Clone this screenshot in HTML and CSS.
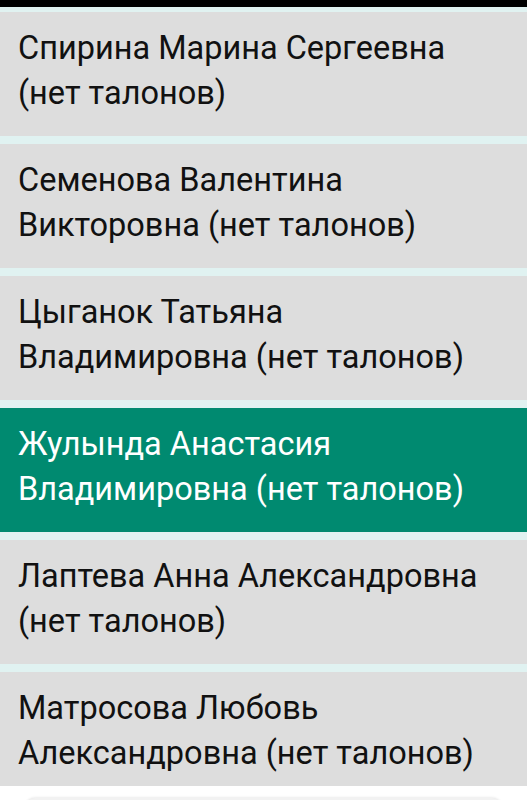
FILE: index.html
```html
<!DOCTYPE html>
<html lang="ru">
<head>
  <meta charset="UTF-8" />
  <title>Врачи</title>
  <link rel="stylesheet" href="styles.css">
</head>
<body>

  <div class="status-bar"></div>

  <ul class="doctor-list">
    <li class="doctor">Спирина Марина Сергеевна (нет талонов)</li>
    <li class="doctor">Семенова Валентина Викторовна (нет талонов)</li>
    <li class="doctor">Цыганок Татьяна Владимировна (нет талонов)</li>
    <li class="doctor selected">Жулында Анастасия Владимировна (нет талонов)</li>
    <li class="doctor">Лаптева Анна Александровна (нет талонов)</li>
    <li class="doctor last">Матросова Любовь Александровна (нет талонов)</li>
  </ul>

  <div class="footer">
    <div class="footer-card"></div>
  </div>

</body>
</html>
```

FILE: styles.css
```css
* {
  box-sizing: border-box;
}
body {
  margin: 0;
  padding: 0;
  background: #ffffff;
  font-family: Roboto, "Noto Sans", sans-serif;
  overflow: hidden;
}
.status-bar {
  height: 7px;
  background: #000000;
}
.doctor-list {
  list-style: none;
  margin: 0;
  padding: 5px 0 0;
  background: #e0f2f1;
}
.doctor {
  background: #dddddd;
  color: #111111;
  font-size: 32.5px;
  line-height: 45px;
  padding: 14px 20px 19px 18px;
  height: 124px;
  margin-bottom: 8px;
}
.doctor.selected {
  background: #008a70;
  color: #ffffff;
}
.doctor.last {
  height: 114px;
  margin-bottom: 0;
}
.footer {
  background: #ffffff;
  height: 40px;
  padding: 12px 25px 0;
}
.footer-card {
  height: 40px;
  border-radius: 10px;
  background: #f2f2f2;
  box-shadow: 0 0 3px rgba(0,0,0,0.15);
}
```
